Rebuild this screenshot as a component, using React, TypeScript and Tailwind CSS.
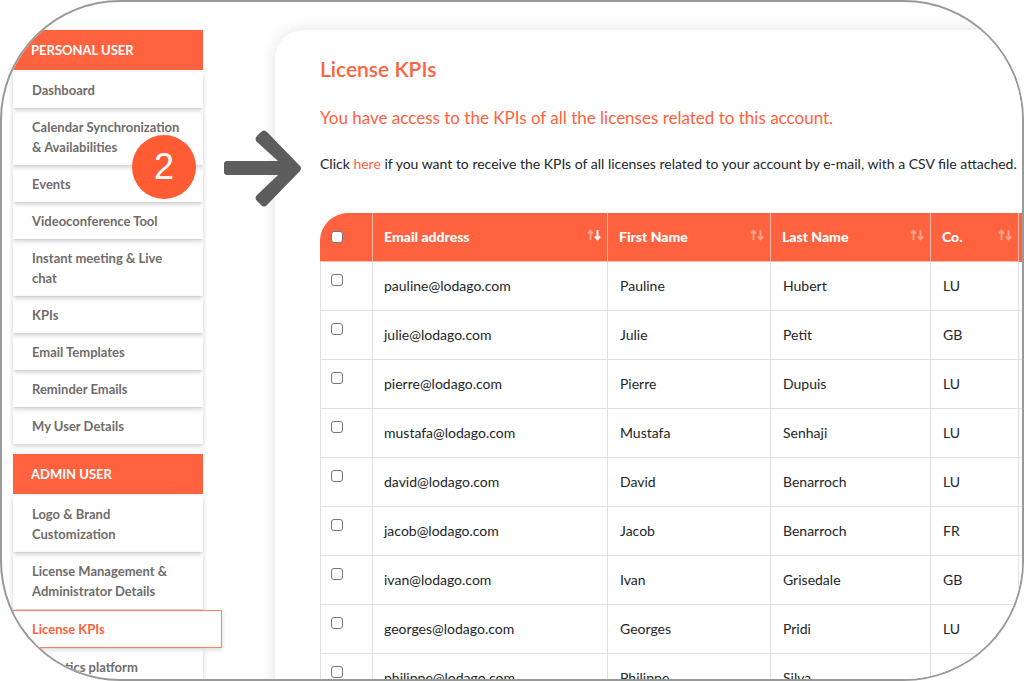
const personalLinks = [
  'Dashboard',
  'Calendar Synchronization & Availabilities',
  'Events',
  'Videoconference Tool',
  'Instant meeting & Live chat',
  'KPIs',
  'Email Templates',
  'Reminder Emails',
  'My User Details',
];

const adminLinks = [
  'Logo & Brand Customization',
  'License Management & Administrator Details',
  'License KPIs',
  'Analytics platform',
];

const licenses = [
  { email: 'pauline@lodago.com', first: 'Pauline', last: 'Hubert', country: 'LU' },
  { email: 'julie@lodago.com', first: 'Julie', last: 'Petit', country: 'GB' },
  { email: 'pierre@lodago.com', first: 'Pierre', last: 'Dupuis', country: 'LU' },
  { email: 'mustafa@lodago.com', first: 'Mustafa', last: 'Senhaji', country: 'LU' },
  { email: 'david@lodago.com', first: 'David', last: 'Benarroch', country: 'LU' },
  { email: 'jacob@lodago.com', first: 'Jacob', last: 'Benarroch', country: 'FR' },
  { email: 'ivan@lodago.com', first: 'Ivan', last: 'Grisedale', country: 'GB' },
  { email: 'georges@lodago.com', first: 'Georges', last: 'Pridi', country: 'LU' },
  { email: 'philippe@lodago.com', first: 'Philippe', last: 'Silva', country: 'LU' },
];

function NavSection({ title, links, active }: { title: string; links: string[]; active?: string }) {
  return (
    <section className="mb-2.5">
      <h2 className="bg-[#ff623e] px-[18px] text-[13px] leading-10 font-bold text-white">{title}</h2>
      <ul className="flex flex-col gap-px pt-0.5">
        {links.map((link) => (
          <li key={link}>
            {link === active ? (
              <a
                href="#"
                aria-current="page"
                className="-mr-[19px] block border border-[#ff8064] bg-white px-[18px] py-2 text-[#ff623e] shadow-[0_2px_5px_rgba(0,0,0,0.15)]"
              >
                {link}
              </a>
            ) : (
              <a href="#" className="block px-[19px] py-2 shadow-[0_2px_5px_rgba(0,0,0,0.2)]">
                {link}
              </a>
            )}
          </li>
        ))}
      </ul>
    </section>
  );
}

function SortArrows({ sorted }: { sorted?: boolean }) {
  return (
    <svg width="14" height="12" viewBox="0 0 14 12" fill="none" stroke="#fff" strokeWidth="2" aria-hidden="true">
      <path d="M3.5 11V2M1 4.5L3.5 1.8L6 4.5" opacity="0.4" />
      <path d="M10.5 1V10M8 7.5L10.5 10.2L13 7.5" opacity={sorted ? 1 : 0.4} />
    </svg>
  );
}

function HeaderCell({ label, sorted }: { label: string; sorted?: boolean }) {
  return (
    <th scope="col" className="h-[49px] border-r border-b border-[#ffb9a8] p-0 text-left font-black">
      <button type="button" className="flex w-full items-center justify-between pr-1.5 pl-[11px] font-black">
        {label}
        <span className="pb-1">
          <SortArrows sorted={sorted} />
        </span>
      </button>
    </th>
  );
}

function Checkbox({ label }: { label: string }) {
  return (
    <input
      type="checkbox"
      aria-label={label}
      className="block size-3 appearance-none rounded-[3px] border border-[#767676] bg-white checked:bg-[#ff623e]"
    />
  );
}

export default function App() {
  return (
    <div className="relative h-screen overflow-hidden rounded-[120px] border-2 border-[#999] bg-white font-['Lato','Noto_Sans',sans-serif] text-sm leading-5">
      <div className="flex pt-7 pl-[11px]">
        <nav className="w-[190px] shrink-0 text-[13px] leading-5 font-bold text-[#706c6a]">
          <NavSection title="PERSONAL USER" links={personalLinks} />
          <NavSection title="ADMIN USER" links={adminLinks} active="License KPIs" />
        </nav>

        <main className="ml-[72px] min-w-0 flex-1 rounded-tl-[28px] bg-white pt-6 pl-[45px] text-[#212529] shadow-[0_0_16px_rgba(0,0,0,0.12)]">
          <h1 className="text-[21px] leading-[30px] font-semibold text-[#ff623e]">License KPIs</h1>
          <p className="mt-[18px] text-[17px] leading-8 text-[#ff623e]">
            You have access to the KPIs of all the licenses related to this account.
          </p>
          <p className="mt-5 whitespace-nowrap">
            Click <a href="#" className="text-[#ff623e]">here</a> if you want to receive the KPIs of all licenses
            related to your account by e-mail, with a CSV file attached.
          </p>

          <table className="mt-[39px] w-full table-fixed border-separate border-spacing-0">
            <colgroup>
              <col className="w-[53px]" />
              <col />
              <col className="w-[163px]" />
              <col className="w-[160px]" />
              <col className="w-[88px]" />
              <col className="w-[3px]" />
            </colgroup>
            <thead className="text-white">
              <tr className="[&>th]:bg-[#ff623e]">
                <th scope="col" className="rounded-tl-[28px] border-r border-b border-[#ffb9a8] py-0 pr-0 pl-[11px]">
                  <Checkbox label="Select all" />
                </th>
                <HeaderCell label="Email address" sorted />
                <HeaderCell label="First Name" />
                <HeaderCell label="Last Name" />
                <HeaderCell label="Co." />
                <th className="p-0" />
              </tr>
            </thead>
            <tbody className="[&_td]:h-[49px] [&_td]:border-r [&_td]:border-b [&_td]:border-[#dee2e6] [&_td]:py-0 [&_td]:pr-0">
              {licenses.map((row) => (
                <tr key={row.email}>
                  <td className="border-l pb-3! pl-2.5">
                    <Checkbox label={`Select ${row.email}`} />
                  </td>
                  <td className="pl-[11px]">{row.email}</td>
                  <td className="pl-3">{row.first}</td>
                  <td className="pl-3">{row.last}</td>
                  <td className="pl-3">{row.country}</td>
                  <td className="border-r-0!" />
                </tr>
              ))}
            </tbody>
          </table>
        </main>
      </div>

      {/* Step marker and pointer drawn over the page */}
      <div className="absolute top-[133px] left-[130px] flex size-16 items-center justify-center rounded-full bg-[#ff5c33] font-['Liberation_Sans',sans-serif] text-4xl text-white">
        2
      </div>
      <svg
        className="absolute top-[128px] left-[221px]"
        width="80"
        height="78"
        viewBox="0 0 80 78"
        fill="#5d5d5d"
        aria-hidden="true"
      >
        <path d="M4 31H55L34 12Q31 9 34 6L38 2Q41 -1 44 2L77 36Q79 38 77 41L44 75Q41 78 38 75L34 71Q31 68 34 65L55 45H4Q1 45 1 42V34Q1 31 4 31Z" />
      </svg>
    </div>
  );
}
